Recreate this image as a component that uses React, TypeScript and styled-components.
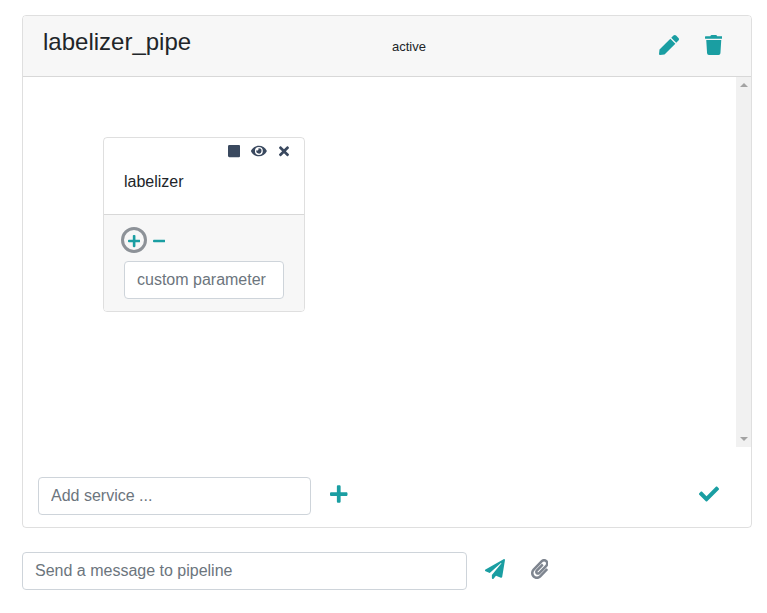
import React from 'react';
import styled, { createGlobalStyle } from 'styled-components';
import {
  FaPen, FaTrash, FaStop, FaEye, FaTimes, FaPlus, FaMinus, FaCheck, FaPaperPlane, FaPaperclip,
} from 'react-icons/fa';

const teal = '#1a9ea2';
const navy = '#3a495f';

const GlobalStyle = createGlobalStyle`
  *, *::before, *::after { box-sizing: border-box; }
  body {
    margin: 0;
    background: #fff;
    color: #212529;
    font: 16px/24px "Liberation Sans", Arial, sans-serif;
    overflow: hidden;
  }
`;

const Page = styled.main`
  padding: 15px 15px 0 22px;
`;

const PipelineCard = styled.section`
  display: flex;
  flex-direction: column;
  height: 513px;
  border: 1px solid rgba(0, 0, 0, 0.125);
  border-radius: 4px;
`;

const PipelineHeader = styled.header`
  display: grid;
  grid-template-columns: 349px 1fr auto;
  align-items: center;
  height: 61px;
  padding: 0 28.75px 0 20px;
  background: #f7f7f7;
  border-bottom: 1px solid rgba(0, 0, 0, 0.125);
  border-radius: 3px 3px 0 0;
`;

const Title = styled.h1`
  margin: 0 0 9px;
  font-size: 24px;
  font-weight: 400;
  line-height: 29px;
`;

const Status = styled.span`
  font-size: 13px;
  line-height: 20px;
  padding-top: 1px;
`;

const Actions = styled.div<{ $gap: number }>`
  display: flex;
  align-items: center;
  gap: ${({ $gap }) => $gap}px;
`;

const IconButton = styled.button<{ $width: number; $size?: number; $color?: string; $lift?: number }>`
  display: flex;
  flex: none;
  padding: 0;
  margin-bottom: ${({ $lift }) => ($lift ?? 0) * 2}px;
  border: 0;
  background: none;
  color: ${({ $color }) => $color ?? teal};
  cursor: pointer;

  svg {
    display: block;
    width: ${({ $width }) => $width}px;
    height: ${({ $size }) => $size ?? 20}px;
  }
`;

const Canvas = styled.div`
  display: flex;
  justify-content: space-between;
  height: 370px;
`;

const ServiceCard = styled.article`
  width: 202px;
  height: 175px;
  margin: 60px 0 0 80px;
  border: 1px solid rgba(0, 0, 0, 0.125);
  border-radius: 4px;
  overflow: hidden;
`;

const ServiceTop = styled.div`
  height: 76px;
`;

const ServiceTools = styled.div`
  display: flex;
  justify-content: flex-end;
  align-items: center;
  gap: 11px;
  height: 20px;
  padding: 6px 15px 0 0;

  button:last-child {
    margin-left: 1px;
  }
`;

const ServiceName = styled.div`
  padding: 12px 20px 0;
`;

const ServiceParams = styled.div`
  height: 97px;
  padding: 12px 20px 0;
  background: #f7f7f7;
  border-top: 1px solid rgba(0, 0, 0, 0.125);
`;

const ParamTools = styled.div`
  display: flex;
  align-items: center;
  gap: 6px;
  margin: 0 0 8px -3px;
`;

const FocusRing = styled.div`
  display: grid;
  place-items: center;
  width: 26px;
  height: 26px;
  padding-top: 2px;
  border: 3px solid #8d9298;
  border-radius: 50%;
`;

const MinusSlot = styled.div`
  padding-top: 1px;
`;

const TextInput = styled.input<{ $width: number }>`
  display: block;
  width: ${({ $width }) => $width}px;
  height: 38px;
  padding: 6px 12px;
  border: 1px solid #ced4da;
  border-radius: 4px;
  background: #fff;
  font: inherit;
  color: #495057;

  &::placeholder {
    color: #6c757d;
    opacity: 1;
  }
`;

const ScrollTrack = styled.div`
  display: flex;
  flex-direction: column;
  justify-content: space-between;
  align-items: center;
  width: 15px;
  padding: 6px 0 6px;
  background: #f1f1f1;

  svg {
    display: block;
    width: 8px;
    height: 4px;
    fill: #a3a3a3;
  }
`;

const AddRow = styled.div`
  display: flex;
  align-items: center;
  justify-content: space-between;
  height: 38px;
  margin: 30px 32.5px 0 15px;
`;

const MessageRow = styled.form`
  display: flex;
  align-items: center;
  gap: 17.5px;
  margin-top: 24px;
`;

export default function App() {
  return (
    <>
      <GlobalStyle />
      <Page>
        <PipelineCard>
          <PipelineHeader>
            <Title>labelizer_pipe</Title>
            <Status>active</Status>
            <Actions $gap={26.25}>
              <IconButton $width={20} $lift={1} aria-label="Edit"><FaPen /></IconButton>
              <IconButton $width={17.5} $lift={1} aria-label="Delete"><FaTrash /></IconButton>
            </Actions>
          </PipelineHeader>

          <Canvas>
            <ServiceCard>
              <ServiceTop>
                <ServiceTools>
                  <IconButton $width={12.25} $size={14} $color={navy} aria-label="Stop"><FaStop /></IconButton>
                  <IconButton $width={15.75} $size={14} $color={navy} aria-label="View"><FaEye /></IconButton>
                  <IconButton $width={10} $size={14.5} $color={navy} aria-label="Remove"><FaTimes /></IconButton>
                </ServiceTools>
                <ServiceName>labelizer</ServiceName>
              </ServiceTop>
              <ServiceParams>
                <ParamTools>
                  <FocusRing>
                    <IconButton $width={12.25} $size={14} aria-label="Add parameter"><FaPlus /></IconButton>
                  </FocusRing>
                  <MinusSlot>
                    <IconButton $width={12.25} $size={14} aria-label="Remove parameter"><FaMinus /></IconButton>
                  </MinusSlot>
                </ParamTools>
                <TextInput $width={160} placeholder="custom parameter" />
              </ServiceParams>
            </ServiceCard>
            <ScrollTrack>
              <svg viewBox="0 0 8 4"><path d="M0 4 4 0l4 4z" /></svg>
              <svg viewBox="0 0 8 4"><path d="M0 0h8L4 4z" /></svg>
            </ScrollTrack>
          </Canvas>

          <AddRow>
            <Actions $gap={19}>
              <TextInput $width={273} placeholder="Add service ..." />
              <IconButton $width={17.5} $lift={2} aria-label="Add service"><FaPlus /></IconButton>
            </Actions>
            <IconButton $width={20} $lift={2} aria-label="Confirm"><FaCheck /></IconButton>
          </AddRow>
        </PipelineCard>

        <MessageRow>
          <TextInput $width={445} placeholder="Send a message to pipeline" />
          <Actions $gap={26}>
            <IconButton $width={20} $lift={2} type="button" aria-label="Send"><FaPaperPlane /></IconButton>
            <IconButton $width={17.5} $lift={2} $color="#7e858f" type="button" aria-label="Attach"><FaPaperclip /></IconButton>
          </Actions>
        </MessageRow>
      </Page>
    </>
  );
}
